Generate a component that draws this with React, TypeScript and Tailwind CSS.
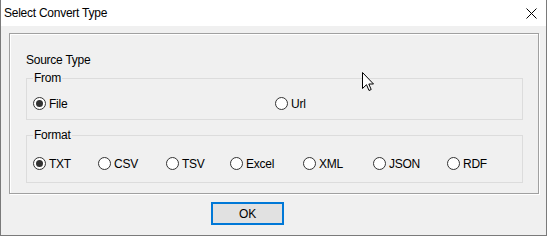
import React from "react";

const Radio = ({ checked }: { checked?: boolean }) => (
  <svg width="13" height="13" viewBox="0 0 13 13" className="shrink-0 block">
    <circle cx="6.5" cy="6.5" r="6" fill="#ffffff" stroke="#333333" strokeWidth="1" />
    {checked && <circle cx="6.5" cy="6.5" r="3.5" fill="#333333" />}
  </svg>
);

const Option = ({ label, checked, w }: { label: string; checked?: boolean; w: string }) => (
  <div className={`flex items-center gap-[3px] h-[13px] shrink-0 ${w}`}>
    <Radio checked={checked} />
    <span className="leading-[16px] whitespace-nowrap">{label}</span>
  </div>
);

const Group = ({
  title,
  h,
  pt,
  children,
}: {
  title: string;
  h: string;
  pt: string;
  children: React.ReactNode;
}) => (
  <div className={`relative border border-[#dcdcdc] pl-[6px] ${h} ${pt}`}>
    <span className="absolute left-[6px] top-[-9px] px-[1px] bg-[#f0f0f0] leading-[16px] whitespace-nowrap">
      {title}
    </span>
    <div className="flex">{children}</div>
  </div>
);

export default function App() {
  return (
    <div className="relative w-[547px] h-[236px] bg-[#f0f0f0] border-x border-b border-[#7a7a7a] font-['Liberation_Sans',Arial,sans-serif] text-[12px] tracking-[-0.25px] leading-[16px] text-black overflow-hidden">
      <div className="h-[26px] bg-white flex items-center justify-between pl-[3px] pr-[9px]">
        <span className="whitespace-nowrap">Select Convert Type</span>
        <svg width="11" height="11" viewBox="0 0 11 11" className="block">
          <path d="M0.5 0.5 L10.5 10.5 M10.5 0.5 L0.5 10.5" stroke="#000" strokeWidth="1" fill="none" />
        </svg>
      </div>

      <div className="ml-[8px] mt-[7px] w-[530px] h-[161px] border border-[#a0a0a0] shadow-[inset_1px_1px_0_#ffffff,1px_1px_0_#ffffff] pt-[18px] pl-[16px] pr-[15px]">
        <div className="h-[16px] whitespace-nowrap">Source Type</div>
        <div className="mt-[10px]">
          <Group title="From" h="h-[42px]" pt="pt-[18px]">
            <Option label="File" checked w="w-[242px]" />
            <Option label="Url" w="w-[60px]" />
          </Group>
        </div>
        <div className="mt-[15px]">
          <Group title="Format" h="h-[48px]" pt="pt-[21px]">
            <Option label="TXT" checked w="w-[65px]" />
            <Option label="CSV" w="w-[68px]" />
            <Option label="TSV" w="w-[64px]" />
            <Option label="Excel" w="w-[73px]" />
            <Option label="XML" w="w-[70px]" />
            <Option label="JSON" w="w-[74px]" />
            <Option label="RDF" w="w-[60px]" />
          </Group>
        </div>
      </div>

      <div className="mt-[8px] ml-[210px] w-[73px] h-[23px] border-2 border-[#0078d7] bg-[#e1e1e1] flex items-center justify-center">
        OK
      </div>

      <svg
        width="13"
        height="20"
        viewBox="0 0 13 20"
        className="absolute left-[361px] top-[72px] block"
      >
        <path
          d="M0.5 0.5 L0.5 16.5 L4.5 12.7 L7 18.5 L9.2 17.5 L6.8 12 L11.5 12 Z"
          fill="#ffffff"
          stroke="#000000"
          strokeWidth="1"
          strokeLinejoin="miter"
        />
      </svg>
    </div>
  );
}
